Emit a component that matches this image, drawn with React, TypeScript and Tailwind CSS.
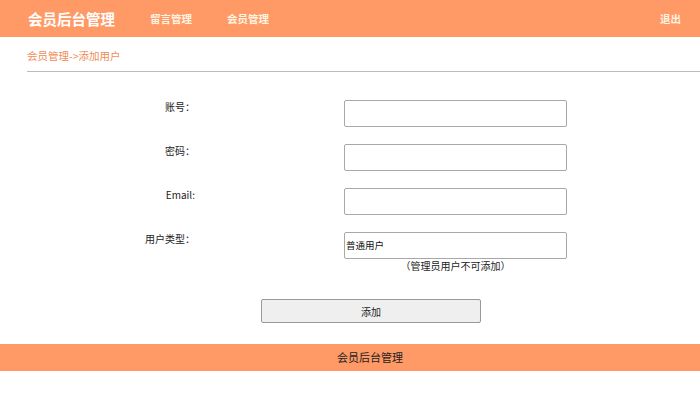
const cjk = "font-['Noto_Sans_CJK_SC','Liberation_Sans',sans-serif]";

function Field({ label, children }: { label: string; children: React.ReactNode }) {
  return (
    <div className="flex h-[44px] items-start">
      <div className="w-[195px] pt-[1px] text-right text-[10px] leading-[12px] text-[#222]">{label}</div>
      <div className="ml-[149px] w-[223px]">{children}</div>
    </div>
  );
}

export default function App() {
  return (
    <div className={`flex h-[395px] w-[700px] flex-col bg-white ${cjk}`}>
      <header className="flex h-[37px] items-center bg-[#ff9966] px-[28px]">
        <span className="text-[14.5px] font-bold text-white">会员后台管理</span>
        <nav className="ml-[35px] flex gap-[35px] text-[10.5px] font-bold text-[#fff3e2]">
          <span>留言管理</span>
          <span>会员管理</span>
        </nav>
        <span className="ml-auto mr-[-9px] text-[10.5px] font-bold text-[#fff3e2]">退出</span>
      </header>

      <div className="ml-[27px] flex h-[35px] items-center border-b border-[#bcbcbc] pt-[3px] text-[10.5px] text-[#f08c55]">
        会员管理-&gt;添加用户
      </div>

      <div className="mt-[28px] flex flex-col">
        <Field label="账号：">
          <div className="h-[27px] rounded-[2px] border border-[#a8a8a8] bg-white" />
        </Field>
        <Field label="密码：">
          <div className="h-[27px] rounded-[2px] border border-[#a8a8a8] bg-white" />
        </Field>
        <Field label="Email:">
          <div className="h-[27px] rounded-[2px] border border-[#a8a8a8] bg-white" />
        </Field>
        <Field label="用户类型：">
          <div className="flex h-[27px] items-center rounded-[2px] border border-[#a8a8a8] bg-white pl-[1px] text-[9.5px] text-[#111]">
            普通用户
          </div>
          <div className="mt-[1px] text-center text-[10px] leading-[12px] text-[#222]">（管理员用户不可添加）</div>
        </Field>
      </div>

      <div className="mt-[23px] flex">
        <button className="ml-[261px] h-[24px] w-[220px] rounded-[2px] border border-[#999] bg-[#efefef] text-[10px] text-[#222]">
          添加
        </button>
      </div>

      <footer className="mt-[21px] flex h-[27px] items-center justify-center bg-[#ff9966] pl-[40px] text-[11px] text-[#222]">
        会员后台管理
      </footer>
    </div>
  );
}
